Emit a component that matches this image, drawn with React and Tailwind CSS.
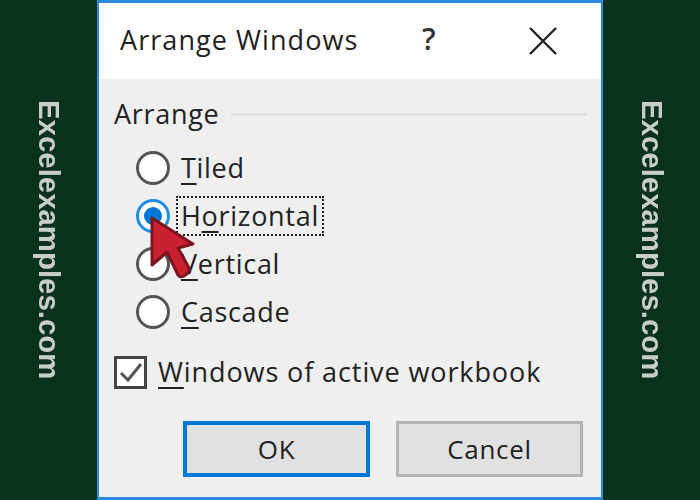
import React from 'react';

function SideLabel() {
  return (
    <div className="w-[97px] h-full bg-[#09321c] flex justify-center pt-[100px] pl-[1px]">
      <span className="[writing-mode:vertical-rl] font-['Liberation_Sans',sans-serif] font-bold tracking-normal text-[29.4px] leading-none text-[#c9cdca] whitespace-nowrap h-fit">
        Excelexamples.com
      </span>
    </div>
  );
}

function Radio({ label, ul, checked, focused }) {
  const before = label.slice(0, label.indexOf(ul));
  const after = label.slice(label.indexOf(ul) + 1);
  return (
    <div className="h-12 flex items-center gap-[11px]">
      {checked ? (
        <span className="w-[34px] h-[34px] rounded-full border-[3px] border-[#1e8fe6] bg-white flex items-center justify-center">
          <span className="w-[18px] h-[18px] rounded-full bg-[#0078d7]" />
        </span>
      ) : (
        <span className="w-[34px] h-[34px] rounded-full border-[3px] border-[#555555] bg-white" />
      )}
      <span className={focused ? 'border-2 border-dotted border-[#222222] px-[3px] -ml-[5px] h-10 flex items-center' : ''}>
        <span>{before}<span className="underline underline-offset-[5px] decoration-2">{ul}</span>{after}</span>
      </span>
    </div>
  );
}

function Button({ children, primary }) {
  return (
    <button className={primary
      ? 'w-[187px] h-[56px] bg-[#e1e1e1] border-[4px] border-[#0078d7] text-[26px]'
      : 'w-[187px] h-[56px] bg-[#e1e1e1] border-[3px] border-[#b4b4b4] text-[26px]'}>
      {children}
    </button>
  );
}

export default function App() {
  return (
    <div className="w-[700px] h-[500px] flex overflow-hidden blur-[0.5px] font-['Open_Sans',sans-serif] text-[#222222] tracking-[0.7px]">
      <SideLabel />
      <div className="relative w-[506px] h-full border-x-2 border-y-[3px] border-[#2b8ae0] bg-[#efefef] flex flex-col">
        <div className="h-[76px] shrink-0 bg-white flex items-center pl-[21px] pb-[1px] text-[27px] tracking-[1.07px]">
          <span className="w-[302px]">Arrange Windows</span>
          <span className="w-[25px] text-[30px] font-semibold text-[#333333] -mt-[4px]">?</span>
          <svg className="ml-[82px] w-7 h-7" viewBox="0 0 28 28" fill="none" stroke="#222222" strokeWidth="2.4">
            <path d="M1 1 L27 27 M27 1 L1 27" />
          </svg>
        </div>
        <div className="flex-1 flex flex-col pl-[15px] pr-[18px] text-[27px]">
          <div className="flex items-center gap-[12px] h-[36px] mt-[17px] -mr-[3px]">
            <span>Arrange</span>
            <span className="flex-1 h-[3px] bg-[#e1e1e1]" />
          </div>
          <div className="flex flex-col pl-[22px] mt-[12px]">
            <Radio label="Tiled" ul="T" />
            <Radio label="Horizontal" ul="o" checked focused />
            <Radio label="Vertical" ul="V" />
            <Radio label="Cascade" ul="C" />
          </div>
          <div className="flex items-center gap-[11px] mt-[19px] h-[34px]">
            <span className="w-[33px] h-[33px] border-[3px] border-[#444444] bg-white flex items-center justify-center">
              <svg className="w-6 h-6" viewBox="0 0 24 24" fill="none" stroke="#555555" strokeWidth="3">
                <path d="M2 13 L9 20 L22 4" />
              </svg>
            </span>
            <span className="tracking-[0.9px]"><span className="underline underline-offset-[5px] decoration-2">W</span>indows of active workbook</span>
          </div>
          <div className="flex justify-end gap-[26px] mt-[32px]">
            <Button primary>OK</Button>
            <Button>Cancel</Button>
          </div>
        </div>
        {/* mouse pointer lying over the radio buttons */}
        <svg className="absolute left-[50px] top-[212px] w-[50px] h-[66px]" viewBox="0 0 50 66">
          <path d="M3 3 L3 50 L18 37 L29 60 Q31 63 35 61 L39 58 Q41 56 40 53 L29 33 L44 29 Z" fill="#c9202f" stroke="#7e1420" strokeWidth="3" strokeLinejoin="round" />
        </svg>
      </div>
      <SideLabel />
    </div>
  );
}
